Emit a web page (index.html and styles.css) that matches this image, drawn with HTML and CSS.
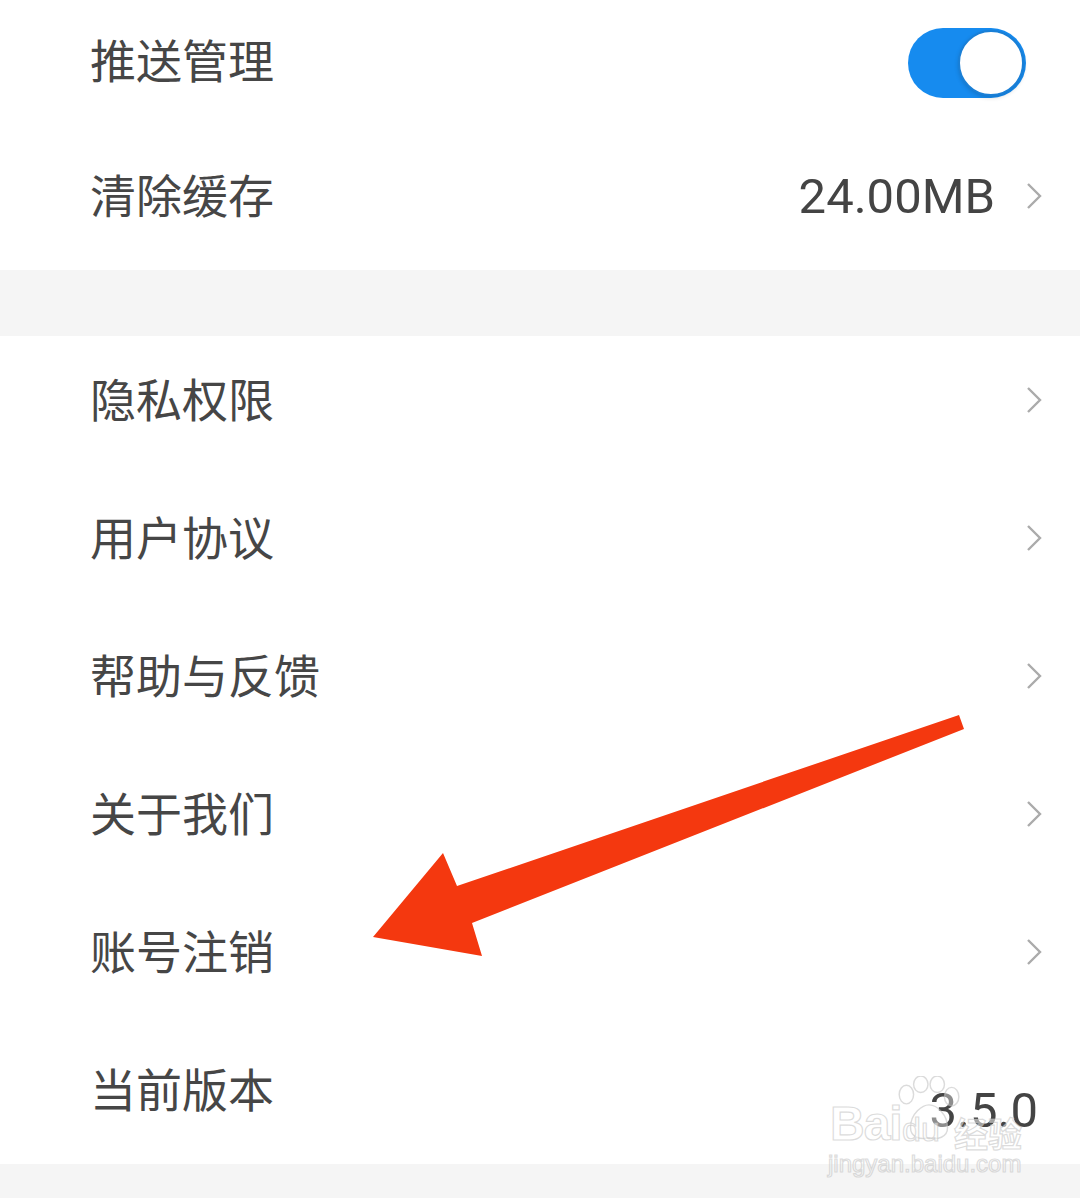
FILE: index.html
```html
<!DOCTYPE html>
<html lang="zh-CN">
<head>
    <meta charset="UTF-8">
    <meta name="viewport" content="width=device-width, initial-scale=1.0">
    <title>设置</title>
    <link rel="stylesheet" href="styles.css">
</head>
<body>
    <div class="page">
        <div class="section">
            <div class="row row-first">
                <span class="label">推送管理</span>
                <div class="switch on"><span class="knob"></span></div>
            </div>
            <div class="row">
                <span class="label">清除缓存</span>
                <span class="value">24.00MB</span>
                <svg class="chevron" viewBox="0 0 16 28"><polyline points="2,2 14,14 2,26"/></svg>
            </div>
        </div>
        <div class="divider"></div>
        <div class="section">
            <div class="row">
                <span class="label">隐私权限</span>
                <svg class="chevron" viewBox="0 0 16 28"><polyline points="2,2 14,14 2,26"/></svg>
            </div>
            <div class="row">
                <span class="label">用户协议</span>
                <svg class="chevron" viewBox="0 0 16 28"><polyline points="2,2 14,14 2,26"/></svg>
            </div>
            <div class="row">
                <span class="label">帮助与反馈</span>
                <svg class="chevron" viewBox="0 0 16 28"><polyline points="2,2 14,14 2,26"/></svg>
            </div>
            <div class="row">
                <span class="label">关于我们</span>
                <svg class="chevron" viewBox="0 0 16 28"><polyline points="2,2 14,14 2,26"/></svg>
            </div>
            <div class="row">
                <span class="label">账号注销</span>
                <svg class="chevron" viewBox="0 0 16 28"><polyline points="2,2 14,14 2,26"/></svg>
            </div>
            <div class="row row-version">
                <span class="label">当前版本</span>
                <span class="value version">3.5.0</span>
            </div>
        </div>
        <div class="footer"></div>

        <!-- annotation arrow -->
        <svg class="arrow" width="1080" height="1198" viewBox="0 0 1080 1198">
            <polygon points="373,937 443,853 457,886 959,715 964,729 472,923 482,956"/>
        </svg>

        <!-- watermark -->
        <div class="watermark">
            <div class="wm-top">
                <span class="wm-bai">Bai</span>
                <svg class="wm-paw" viewBox="0 0 70 64">
                    <ellipse cx="14" cy="18" rx="7" ry="9"/>
                    <ellipse cx="28" cy="8" rx="7" ry="8"/>
                    <ellipse cx="44" cy="8" rx="7" ry="8"/>
                    <ellipse cx="58" cy="20" rx="7" ry="9"/>
                    <path d="M18 50 C18 36 30 28 36 28 C44 28 54 38 54 50 C54 60 44 62 36 60 C28 62 18 60 18 50 Z"/>
                </svg>
                <span class="wm-du">du</span>
                <span class="wm-jy">经验</span>
            </div>
            <div class="wm-url">jingyan.baidu.com</div>
        </div>
    </div>
</body>
</html>
```

FILE: styles.css
```css
body {
    margin: 0;
    background-color: #fff;
    font-family: "Noto Sans CJK SC", "Noto Sans", sans-serif;
    color: #464646;
}
.page {
    position: relative;
    width: 1080px;
    height: 1198px;
    overflow: hidden;
    display: flex;
    flex-direction: column;
}
.section {
    background-color: #fff;
}
.row {
    height: 138px;
    display: flex;
    align-items: center;
    padding: 0 38px 0 90px;
}
.row-first {
    height: 132px;
    padding-right: 54px;
}
.label {
    flex: 1;
    font-size: 46px;
    line-height: 1;
    margin-bottom: 16px;
}
.value {
    font-family: Roboto, "Noto Sans", sans-serif;
    font-size: 49px;
    line-height: 1;
    color: #444;
    margin-right: 31px;
    margin-bottom: 10px;
}
.version {
    margin-right: 4px;
    margin-top: 30px;
    margin-bottom: 0;
}
.chevron {
    width: 16px;
    height: 28px;
    fill: none;
    stroke: #ababab;
    stroke-width: 2.4;
    margin-bottom: 10px;
}
.switch {
    width: 118px;
    height: 70px;
    border-radius: 35px;
    background-color: #168bef;
    display: flex;
    align-items: center;
    justify-content: flex-end;
    padding: 0 2px;
    box-sizing: border-box;
    margin-bottom: 6px;
}
.knob {
    width: 62px;
    height: 62px;
    border-radius: 50%;
    background-color: #fff;
    border: 2px solid #1a7fd6;
    box-shadow: 0 2px 4px rgba(0, 0, 0, 0.15);
}
.divider {
    height: 66px;
    background-color: #f5f5f5;
}
.footer {
    flex: 1;
    background-color: #f5f5f5;
}
.arrow {
    position: absolute;
    left: 0;
    top: 0;
    fill: #f4380f;
}
.watermark {
    position: absolute;
    left: 828px;
    top: 1076px;
    width: 200px;
    font-family: "Liberation Sans", Arial, sans-serif;
    color: rgba(255, 255, 255, 0.5);
    -webkit-text-stroke: 1.2px rgba(190, 190, 190, 0.55);
    pointer-events: none;
}
.wm-top {
    position: relative;
    height: 72px;
}
.wm-bai {
    position: absolute;
    left: 2px;
    top: 20px;
    font-size: 48px;
    font-weight: bold;
    letter-spacing: -1px;
}
.wm-paw {
    position: absolute;
    left: 64px;
    top: 0;
    width: 72px;
    height: 66px;
    fill: rgba(255, 255, 255, 0.4);
    stroke: rgba(190, 190, 190, 0.55);
    stroke-width: 1.4;
}
.wm-du {
    position: absolute;
    left: 74px;
    top: 34px;
    font-size: 34px;
}
.wm-jy {
    position: absolute;
    left: 126px;
    top: 32px;
    font-family: "Noto Sans CJK SC", sans-serif;
    font-size: 34px;
    font-weight: bold;
}
.wm-url {
    font-size: 24px;
    margin-top: 2px;
}
```
